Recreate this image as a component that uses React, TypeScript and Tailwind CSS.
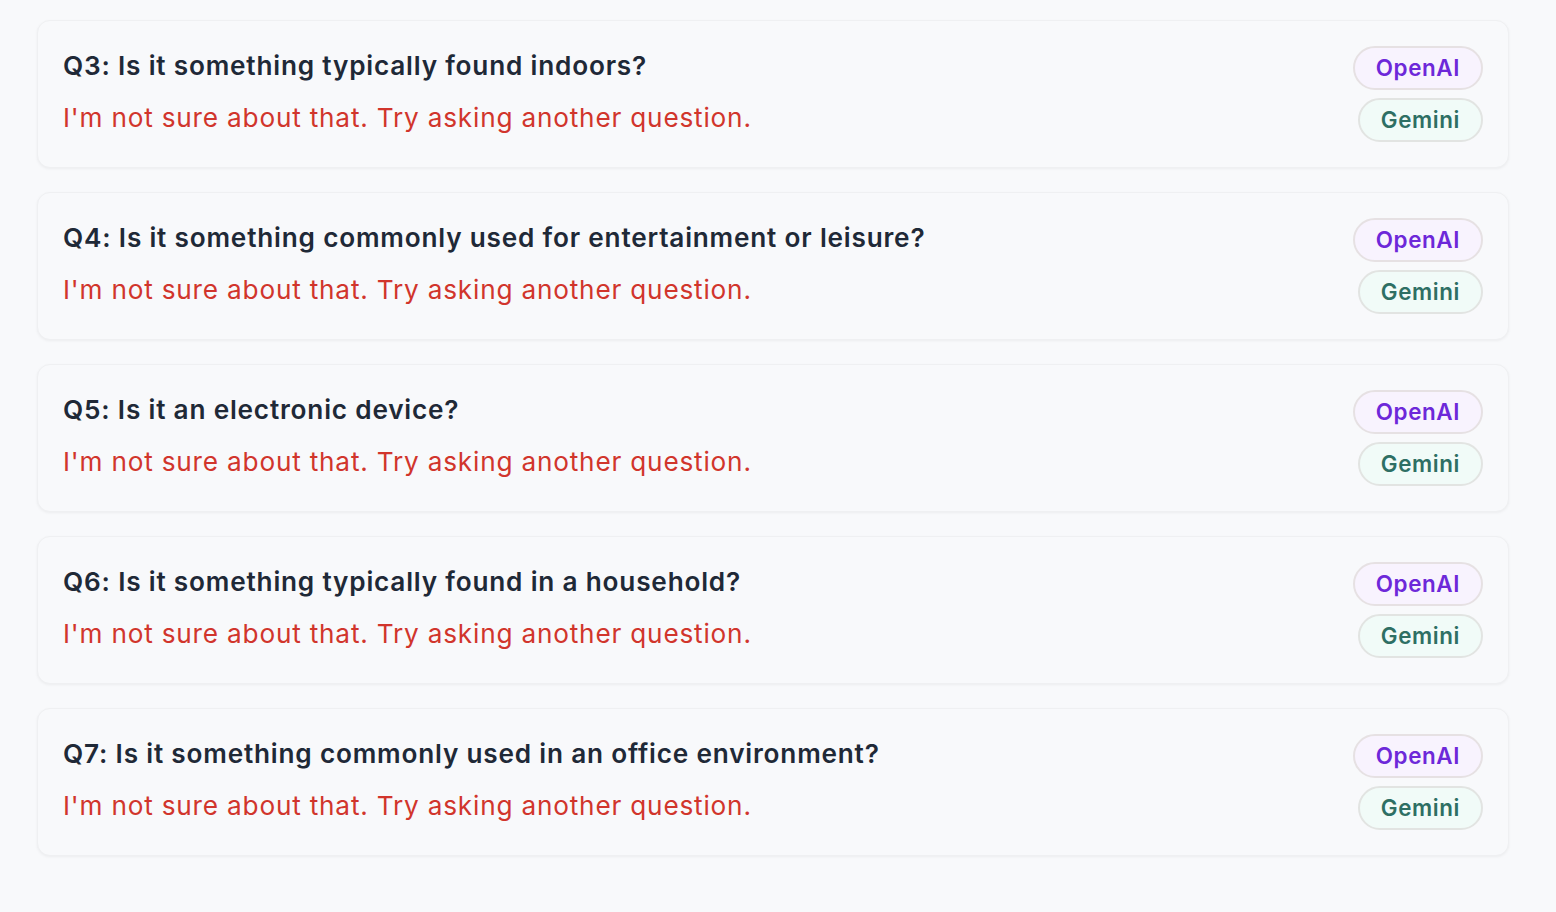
import React from "react";

const items = [
  "Q3: Is it something typically found indoors?",
  "Q4: Is it something commonly used for entertainment or leisure?",
  "Q5: Is it an electronic device?",
  "Q6: Is it something typically found in a household?",
  "Q7: Is it something commonly used in an office environment?",
];

export default function App() {
  return (
    <div
      className="min-h-[912px] w-full bg-[#f8f9fb] pt-[20px] pl-[37px] pr-[47px]"
      style={{ fontFamily: "Inter, 'Noto Sans', sans-serif" }}
    >
      <div className="flex flex-col gap-[24px]">
        {items.map((q) => (
          <div
            key={q}
            className="flex items-start justify-between rounded-[13px] border border-[#eff0f2] bg-[#f8f9fb] px-[25px] pt-[25px] pb-[25px] shadow-[0_1px_3px_rgba(0,0,0,0.05)]"
          >
            <div className="flex flex-col gap-[14px] pt-[1px]">
              <div className="text-[26.2px] leading-[38px] font-semibold tracking-[0.8px] text-[#1f2937]">{q}</div>
              <div className="text-[26.2px] leading-[38px] tracking-[0.8px] text-[#d1352c]">
                I'm not sure about that. Try asking another question.
              </div>
            </div>
            <div className="flex flex-col items-end gap-[8px]">
              <span className="flex h-[44px] items-center rounded-full border-2 border-[#e6e1e3] bg-[#f8f3fe] px-[21px] text-[22.4px] font-semibold tracking-[0.6px] text-[#6d28d9]">
                OpenAI
              </span>
              <span className="flex h-[44px] items-center rounded-full border-2 border-[#e2e4e2] bg-[#f1fbf8] px-[21px] text-[22.4px] font-semibold tracking-[0.6px] text-[#2e6f64]">
                Gemini
              </span>
            </div>
          </div>
        ))}
      </div>
    </div>
  );
}
